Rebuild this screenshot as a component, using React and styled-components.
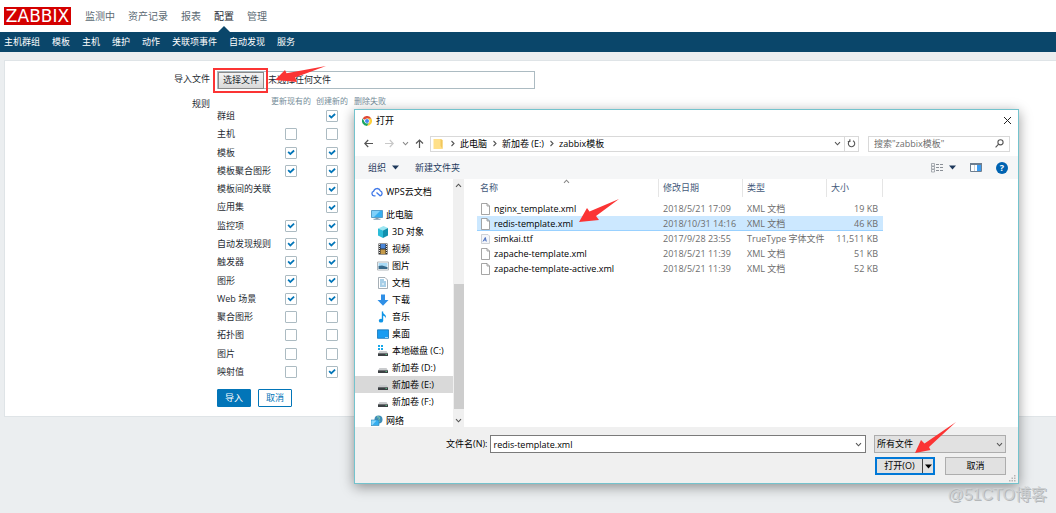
import { useState } from "react";
import styled, { createGlobalStyle } from "styled-components";

const GlobalStyle = createGlobalStyle`
  * {
    box-sizing: border-box;
  }
  body {
    margin: 0;
    background-color: #ebeef0;
    color: #1f2c33;
    font-family: "Open Sans", "Noto Sans CJK SC", sans-serif;
    font-size: 9px;
    line-height: 12px;
  }
  button, input, select {
    font: inherit;
    color: inherit;
    margin: 0;
  }
`;

const Page = styled.div`
  position: relative;
  min-height: 100vh;
`;

// ---- top navigation ----

const Header = styled.header`
  display: flex;
  align-items: center;
  height: 32px;
  padding-left: 4px;
  background-color: #fff;
`;

const Logo = styled.a`
  width: 67px;
  background-color: #d40000;
  color: #fff;
  font-family: "DejaVu Sans", sans-serif;
  font-size: 17px;
  line-height: 18px;
  text-align: center;
  text-decoration: none;
`;

const MainMenu = styled.nav`
  display: flex;
  align-self: stretch;
  gap: 13px;
  margin-left: 14px;
`;

const MainLink = styled.a`
  position: relative;
  display: flex;
  align-items: center;
  color: ${(props) => (props.$active ? "#1f2c33" : "#5b6a73")};
  font-size: 10px;
  text-decoration: none;

  &::after {
    content: "";
    display: ${(props) => (props.$active ? "block" : "none")};
    position: absolute;
    left: 50%;
    bottom: 0;
    margin-left: -6px;
    border: 6px solid transparent;
    border-top: 0;
    border-bottom-color: #0a466a;
  }
`;

const SubMenu = styled.nav`
  display: flex;
  align-items: center;
  gap: 12px;
  height: 20px;
  padding-left: 4px;
  background-color: #0a466a;
`;

const SubLink = styled.a`
  color: #fff;
  text-decoration: none;
`;

// ---- import form ----

const Card = styled.form`
  margin: 8px 0 0 4px;
  padding: 10px 0 9px;
  border: 1px solid #dfe4e7;
  border-right: 0;
  background-color: #fff;
`;

const FormRow = styled.div`
  display: flex;
  align-items: flex-start;
  gap: 7px;
  margin-bottom: ${(props) => props.$space || 0}px;
`;

const FormLabel = styled.div`
  flex: none;
  width: 205px;
  padding-top: ${(props) => props.$top || 0}px;
  text-align: right;
`;

const FileField = styled.div`
  display: flex;
  align-items: center;
  gap: 4px;
  width: 318px;
  height: 18px;
  border: 1px solid #acbbc2;
`;

const FileButton = styled.button`
  width: 46px;
  height: 17px;
  padding: 0;
  border: 1px solid #8a8a8a;
  background: linear-gradient(#f4f4f4, #d9d9d9);
  line-height: 12px;
`;

const Rules = styled.table`
  table-layout: fixed;
  width: 173px;
  height: 286px;
  border-collapse: collapse;

  td, th {
    padding: 0;
    font-weight: normal;
    white-space: nowrap;
    text-align: center;
    line-height: 12px;
  }
  thead th {
    height: 12px;
    color: #768d99;
    font-size: 8px;
  }
  tbody th {
    text-align: left;
  }
`;

const Check = styled.input`
  display: block;
  appearance: none;
  width: 12px;
  height: 12px;
  margin: 0 auto;
  border: 1px solid #acbbc2;
  border-radius: 1px;
  background-color: #fff;

  &:checked::before {
    content: "";
    display: block;
    width: 10px;
    height: 10px;
    background-color: #0275b8;
    clip-path: polygon(15% 48%, 28% 36%, 43% 52%, 75% 22%, 87% 35%, 43% 77%);
  }
`;

const FormButton = styled.button`
  width: 34px;
  height: 18px;
  padding: 0;
  border: 1px solid #0275b8;
  border-radius: 1px;
  background-color: ${(props) => (props.$primary ? "#0275b8" : "#fff")};
  color: ${(props) => (props.$primary ? "#fff" : "#0275b8")};
`;

// ---- open file dialog ----

const Dialog = styled.section`
  position: absolute;
  top: 109px;
  left: 354px;
  right: 37px;
  border: 1px solid #74c3cd;
  background-color: #fff;
  box-shadow: 0 3px 12px rgba(0, 0, 0, 0.4);
  color: #000;
`;

const TitleBar = styled.div`
  display: flex;
  align-items: center;
  gap: 4px;
  height: 21px;
  padding: 0 6px 0 7px;
`;

const CloseButton = styled.button`
  display: flex;
  margin-left: auto;
  padding: 0;
  border: 0;
  background: none;
`;

const AddressRow = styled.div`
  display: flex;
  align-items: center;
  height: 25px;
  padding: 0 8px 0 9px;
  color: #555;
`;

const NavButton = styled.button`
  display: flex;
  margin-right: ${(props) => props.$gap}px;
  padding: 0;
  border: 0;
  background: none;
`;

const AddressBox = styled.div`
  display: flex;
  flex: 1;
  align-items: center;
  height: 16px;
  padding-left: 2px;
  border: 1px solid #d9d9d9;
  color: #000;
`;

const Crumbs = styled.div`
  display: flex;
  flex: 1;
  align-items: center;
  gap: 4px;
  margin-left: 6px;
`;

const RefreshCell = styled.button`
  display: flex;
  align-items: center;
  justify-content: center;
  width: 14px;
  height: 14px;
  margin-left: 3px;
  padding: 0;
  border: 0;
  border-left: 1px solid #d9d9d9;
  background: none;
`;

const SearchBox = styled.div`
  display: flex;
  align-items: center;
  width: 142px;
  height: 16px;
  margin-left: 9px;
  padding: 0 5px;
  border: 1px solid #d9d9d9;
`;

const SearchInput = styled.input`
  flex: 1;
  min-width: 0;
  height: 12px;
  padding: 0;
  border: 0;
  outline: 0;

  &::placeholder {
    color: #6d6d6d;
  }
`;

const Toolbar = styled.div`
  display: flex;
  align-items: center;
  gap: 16px;
  height: 23px;
  padding: 0 10px 0 13px;
  background-color: #f5f6f7;
  color: #1e395b;
`;

const ToolButton = styled.button`
  display: flex;
  align-items: center;
  gap: 6px;
  padding: 0;
  border: 0;
  background: none;
`;

const ToolIcons = styled.div`
  display: flex;
  align-items: center;
  gap: 14px;
  margin-left: auto;
`;

const Browser = styled.div`
  display: flex;
  height: 248px;
  overflow: hidden;
`;

const Tree = styled.div`
  width: 98px;
  padding-top: 4px;
`;

const TreeItem = styled.div`
  display: flex;
  align-items: center;
  gap: 3px;
  height: 17px;
  margin-bottom: ${(props) => props.$space || 0}px;
  padding-left: ${(props) => (props.$child ? 22 : 16)}px;
  background-color: ${(props) => (props.$selected ? "#d9d9d9" : "transparent")};
  white-space: nowrap;
`;

const ScrollTrack = styled.div`
  display: flex;
  flex-direction: column;
  align-items: center;
  justify-content: space-between;
  width: 11px;
  padding: 3px 0;
  background-color: #f0f0f0;
`;

const ScrollThumb = styled.div`
  width: 10px;
  height: 125px;
  margin: 86px 0 0;
  background-color: #cdcdcd;
`;

const FileArea = styled.div`
  flex: 1;
  padding-left: 13px;
`;

const FileTable = styled.table`
  table-layout: fixed;
  width: 406px;
  border-collapse: separate;
  border-spacing: 0;

  th {
    height: 18px;
    padding: 0 0 0 4px;
    border-right: 1px solid #e5e5e5;
    color: #43597a;
    font-weight: normal;
    text-align: left;
  }
  th:first-child {
    padding-left: 3px;
  }
  tbody::before {
    content: "";
    display: block;
    height: 4px;
  }
`;

const SortHead = styled.div`
  position: relative;

  svg {
    position: absolute;
    top: -4px;
    left: 50%;
    margin-left: -6px;
  }
`;

const FileRow = styled.tr`
  td {
    height: 15px;
    padding: 0 0 0 4px;
    border-top: 1px solid ${(props) => (props.$selected ? "#cce8ff" : "transparent")};
    border-bottom: 1px solid ${(props) => (props.$selected ? "#99d1ff" : "transparent")};
    background-color: ${(props) => (props.$selected ? "#cce8ff" : "transparent")};
    color: #6d6d6d;
    white-space: nowrap;
  }
  td:first-child {
    color: #000;
  }
  td:last-child {
    padding-right: 5px;
    text-align: right;
  }
`;

const FileName = styled.div`
  display: flex;
  align-items: center;
  gap: 4px;
`;

const Footer = styled.div`
  position: relative;
  padding: 8px 12px 8px 91px;
  background-color: #f0f0f0;
`;

const FooterRow = styled.div`
  display: flex;
  align-items: center;
  justify-content: flex-end;
  margin-bottom: ${(props) => props.$space || 0}px;
`;

const NameField = styled.div`
  display: flex;
  flex: 1;
  align-items: center;
  height: 18px;
  margin: 0 8px 0 3px;
  padding-right: 3px;
  border: 1px solid #7a7a7a;
  background-color: #fff;
`;

const NameInput = styled.input`
  flex: 1;
  min-width: 0;
  height: 14px;
  padding: 0 0 0 2px;
  border: 0;
  outline: 0;
  background: none;
`;

const TypeField = styled.div`
  display: flex;
  position: relative;
  width: 132px;

  svg {
    position: absolute;
    top: 6px;
    right: 3px;
    pointer-events: none;
  }
`;

const TypeSelect = styled.select`
  appearance: none;
  width: 100%;
  height: 18px;
  padding: 0 2px;
  border: 1px solid #adadad;
  border-radius: 0;
  background-color: #e1e1e1;
`;

const SplitButton = styled.div`
  display: flex;
  width: 60px;
  height: 18px;
  margin-right: 10px;
  border: 2px solid #0078d7;
  background-color: #e1e1e1;
`;

const SplitPart = styled.button`
  display: flex;
  flex: ${(props) => (props.$arrow ? "none" : 1)};
  align-items: center;
  justify-content: center;
  width: ${(props) => (props.$arrow ? "11px" : "auto")};
  padding: 0;
  border: 0;
  border-left: ${(props) => (props.$arrow ? "1px solid #444" : "0")};
  background: none;
`;

const CancelButton = styled.button`
  width: 61px;
  height: 18px;
  padding: 0;
  border: 1px solid #adadad;
  background-color: #e1e1e1;
`;

const Grip = styled.svg`
  position: absolute;
  right: 2px;
  bottom: 1px;
`;

// ---- marks over the screen ----

const RedFrame = styled.div`
  position: absolute;
  top: 68px;
  left: 213px;
  width: 55px;
  height: 25px;
  border: 2px solid #fb3434;
  pointer-events: none;
`;

const RedArrow = styled.svg`
  position: absolute;
  top: ${(props) => props.$top}px;
  left: ${(props) => props.$left}px;
  pointer-events: none;
  fill: #fb3434;
`;

const Watermark = styled.div`
  position: absolute;
  right: 9px;
  bottom: 8px;
  color: #cdd0d2;
  font-family: "Liberation Sans", "Noto Sans CJK SC", sans-serif;
  font-size: 16px;
  line-height: 20px;
  text-shadow: 1px 1px 0 #b4b7b9;
`;

// ---- icons ----

const Chevron = ({ dir = "right", color = "#555", size = 7 }) => {
  const paths = {
    right: "M2.5 1 5 3.5 2.5 6",
    down: "M1 2.2 3.5 4.8 6 2.2",
    up: "M1 4.8 3.5 2.2 6 4.8",
  };
  return (
    <svg width={size} height={size} viewBox="0 0 7 7" fill="none" stroke={color} strokeWidth="1.1">
      <path d={paths[dir]} />
    </svg>
  );
};

const Caret = ({ color = "#1e395b" }) => (
  <svg width="7" height="5" viewBox="0 0 7 5" fill={color}>
    <path d="M0 .5h7L3.5 4.5z" />
  </svg>
);

const ArrowIcon = ({ dir, color }) => (
  <svg width="9" height="9" viewBox="0 0 9 9" fill="none" stroke={color} strokeWidth="1.2">
    {dir === "left" && <path d="M9 4.5H1M4.2 1 .8 4.5 4.2 8" />}
    {dir === "right" && <path d="M0 4.5h8M4.8 1l3.4 3.5L4.8 8" />}
    {dir === "up" && <path d="M4.5 9V1M1 4.5 4.5 1 8 4.5" />}
  </svg>
);

const ChromeIcon = () => (
  <svg width="10" height="10" viewBox="0 0 20 20">
    <path d="M10 10 1.3 5A10 10 0 0 1 18.7 5z" fill="#df4b37" />
    <path d="M10 10V5h8.7A10 10 0 0 1 10 20l4.3-7.5z" fill="#fdd03b" />
    <path d="M10 10 14.3 12.5 10 20A10 10 0 0 1 1.3 5l4.4 7.5z" fill="#1da462" />
    <circle cx="10" cy="10" r="5" fill="#fff" />
    <circle cx="10" cy="10" r="4" fill="#4688f4" />
  </svg>
);

const FolderIcon = () => (
  <svg width="10" height="12" viewBox="0 0 10 12">
    <path d="M.5 1h7l2 1v9h-9z" fill="#ffe08a" />
    <path d="M7.5 1v7l2 3V2z" fill="#f2c75c" />
  </svg>
);

const RefreshIcon = () => (
  <svg width="9" height="9" viewBox="0 0 9 9" fill="none" stroke="#555" strokeWidth="1.1">
    <path d="M6 1.7A3.2 3.2 0 1 1 2.6 2M2.9.3v2.2H.8" />
  </svg>
);

const SearchIcon = () => (
  <svg width="9" height="9" viewBox="0 0 9 9" fill="none" stroke="#555" strokeWidth="1.1">
    <circle cx="5.5" cy="3.3" r="2.6" />
    <path d="M3.6 5.2.6 8.4" />
  </svg>
);

const ViewIcon = () => (
  <svg width="12" height="10" viewBox="0 0 12 10" fill="none" stroke="#8a8f96" strokeWidth="1">
    <path d="M.5.5h3v2.500h-3zM.5 3.500h3v2.500h-3zM.5 6.500h3v2.500h-3z" strokeWidth=".7" />
    <path d="M5 1.5h3M9 1.5h3M5 4.5h3M9 4.5h3M5 7.5h3M9 7.5h3" />
  </svg>
);

const PaneIcon = () => (
  <svg width="12" height="9" viewBox="0 0 12 9">
    <path d="M.5.5h11v8H.5z" fill="#fff" stroke="#6e7f91" />
    <path d="M0 0h12v2H0z" fill="#6e7f91" />
    <path d="M7 2h4v6H7z" fill="#3c9cf0" />
    <path d="M4 2h1v6H4z" fill="#c5d0da" />
  </svg>
);

const HelpIcon = styled.span`
  width: 12px;
  height: 12px;
  border-radius: 50%;
  background-color: #0063b1;
  color: #fff;
  font-weight: bold;
  line-height: 12px;
  text-align: center;
`;

const DriveIcon = ({ system }) => (
  <svg width="12" height="12" viewBox="0 0 12 12">
    {system && <path d="M1 0h2v2H1zM4 0h2v2H4zM1 3h2v2H1zM4 3h2v2H4z" fill="#18a8ea" />}
    <path d="M2.5 6h7l1.5 2.5H1z" fill="#c9cbcd" />
    <path d="M1 8.3h10V11H1z" fill="#3c4043" />
    <path d="M8.5 9.2H10v.9H8.5z" fill="#58d68d" />
  </svg>
);

const treeIcons = {
  cloud: (
    <svg width="12" height="12" viewBox="0 0 12 12" fill="none" stroke="#3f78e8" strokeWidth="1.3">
      <path d="M4.5 9.8H3a2.3 2.3 0 0 1-.4-4.5A3.5 3.5 0 0 1 9.3 4.8a2.6 2.6 0 0 1-.2 5L5.5 6.5" />
    </svg>
  ),
  pc: (
    <svg width="12" height="12" viewBox="0 0 12 12">
      <path d="M.5 1.5h11v7H.5z" fill="#35aef0" stroke="#3a86b8" strokeWidth=".7" />
      <path d="M1 2h8L3 8H1z" fill="#7fd0fa" />
      <path d="M4.5 8.8h3v1h2v.9h-7v-.9h2z" fill="#7f9bb0" />
    </svg>
  ),
  cube: (
    <svg width="12" height="12" viewBox="0 0 12 12">
      <path d="M1 2.5 6.5 0 11 2 6 4.5z" fill="#9be6f2" />
      <path d="M1 2.5 6 4.5V12L1 9.5z" fill="#2bbcd8" />
      <path d="M6 4.5 11 2v7.5L6 12z" fill="#1090ae" />
    </svg>
  ),
  video: (
    <svg width="12" height="12" viewBox="0 0 12 12">
      <path d="M1.5.5h9v11h-9z" fill="#2b2b2b" />
      <path d="M3.5 1h5v4.5h-5z" fill="#4a86d8" />
      <path d="M3.5 6.5h5V11h-5z" fill="#c59a4a" />
      <path d="M2.5 1v10M9.5 1v10" stroke="#ddd" strokeDasharray="1 1" />
    </svg>
  ),
  image: (
    <svg width="12" height="12" viewBox="0 0 12 12">
      <path d="M.5 2h11v8H.5z" fill="#fff" stroke="#a0a6ab" strokeWidth=".8" />
      <path d="M1.5 3h9v3.5h-9z" fill="#a8daf6" />
      <path d="M1.5 6 5 5.5l5.5 1.5V9h-9z" fill="#35688a" />
    </svg>
  ),
  doc: (
    <svg width="12" height="12" viewBox="0 0 12 12">
      <path d="M1.5.5H8L10.5 3v8.5h-9z" fill="#fff" stroke="#8f9aa3" strokeWidth=".8" />
      <path d="M3 3h4M3 5h6M3 7h2.5M3 9h6M6.5 7H9" stroke="#3d93c9" strokeWidth=".9" />
    </svg>
  ),
  download: (
    <svg width="12" height="12" viewBox="0 0 12 12" fill="#2f8fe6">
      <path d="M4 .5h4V6h3.5L6 11.8.5 6H4z" />
    </svg>
  ),
  music: (
    <svg width="12" height="12" viewBox="0 0 12 12">
      <path d="M5.500.5v9" stroke="#0f94e6" strokeWidth="1.4" />
      <path d="M5 .5c.5 2.500 5.500 3 3.500 7C9 5 6 5 5 4z" fill="#0f94e6" />
      <ellipse cx="4" cy="9.7" rx="2.2" ry="1.9" fill="#0f94e6" />
    </svg>
  ),
  desktop: (
    <svg width="12" height="12" viewBox="0 0 12 12">
      <path d="M.5 1.8h11v8.5H.5z" fill="#189cf2" stroke="#1273b8" strokeWidth=".8" />
      <path d="M8 9.5h3" stroke="#bfe4ff" strokeWidth=".8" />
    </svg>
  ),
  system: <DriveIcon system />,
  drive: <DriveIcon />,
  network: (
    <svg width="12" height="12" viewBox="0 0 12 12">
      <circle cx="7.5" cy="4.5" r="4" fill="#3f8fb8" />
      <path d="M6 2c2-1 3 1 2 2s1 2 0 3" stroke="#8fd3a8" fill="none" />
      <path d="M0 5h8v5.5H0z" fill="#35aef0" stroke="#2b7fb0" strokeWidth=".6" />
      <path d="M.5 5.5h5l-4 4.5h-1z" fill="#8bd6fb" />
    </svg>
  ),
};

const XmlIcon = () => (
  <svg width="9" height="12" viewBox="0 0 9 12" fill="#fff" stroke="#8f8f8f" strokeWidth=".8">
    <path d="M.5.5H6L8.5 3v8.5h-8zM6 .5V3h2.5" />
  </svg>
);

const FontIcon = () => (
  <svg width="9" height="10" viewBox="0 0 9 10">
    <path d="M.5.5H7L8.5 2v7.5h-8z" fill="#f4f6fa" stroke="#c3c6cc" strokeWidth=".8" />
    <path d="M2 7.5 4.3 3.5 5.3 7.5M3 6h2" fill="none" stroke="#3a62b8" strokeWidth=".9" />
  </svg>
);

// ---- data ----

const mainMenu = ["监测中", "资产记录", "报表", "配置", "管理"];
const subMenu = ["主机群组", "模板", "主机", "维护", "动作", "关联项事件", "自动发现", "服务"];

// null means that the rule has no such option
const rules = [
  { name: "群组", update: null, create: true },
  { name: "主机", update: false, create: false },
  { name: "模板", update: true, create: true },
  { name: "模板聚合图形", update: true, create: true },
  { name: "模板间的关联", update: null, create: true },
  { name: "应用集", update: null, create: true },
  { name: "监控项", update: true, create: true },
  { name: "自动发现规则", update: true, create: true },
  { name: "触发器", update: true, create: true },
  { name: "图形", update: true, create: true },
  { name: "Web 场景", update: true, create: true },
  { name: "聚合图形", update: false, create: false },
  { name: "拓扑图", update: false, create: false },
  { name: "图片", update: false, create: false },
  { name: "映射值", update: false, create: true },
];

const tree = [
  { name: "WPS云文档", icon: "cloud", space: 6 },
  { name: "此电脑", icon: "pc" },
  { name: "3D 对象", icon: "cube", child: true },
  { name: "视频", icon: "video", child: true },
  { name: "图片", icon: "image", child: true },
  { name: "文档", icon: "doc", child: true },
  { name: "下载", icon: "download", child: true },
  { name: "音乐", icon: "music", child: true },
  { name: "桌面", icon: "desktop", child: true },
  { name: "本地磁盘 (C:)", icon: "system", child: true },
  { name: "新加卷 (D:)", icon: "drive", child: true },
  { name: "新加卷 (E:)", icon: "drive", child: true, selected: true },
  { name: "新加卷 (F:)", icon: "drive", child: true, space: 2 },
  { name: "网络", icon: "network" },
];

const files = [
  { name: "nginx_template.xml", date: "2018/5/21 17:09", type: "XML 文档", size: "19 KB" },
  { name: "redis-template.xml", date: "2018/10/31 14:16", type: "XML 文档", size: "46 KB" },
  { name: "simkai.ttf", date: "2017/9/28 23:55", type: "TrueType 字体文件", size: "11,511 KB" },
  { name: "zapache-template.xml", date: "2018/5/21 11:39", type: "XML 文档", size: "51 KB" },
  { name: "zapache-template-active.xml", date: "2018/5/21 11:39", type: "XML 文档", size: "52 KB" },
];

function ImportForm() {
  return (
    <Card onSubmit={(e) => e.preventDefault()}>
      <FormRow $space={6}>
        <FormLabel $top={2} id="file-label">导入文件</FormLabel>
        <FileField>
          <FileButton type="button" aria-describedby="file-label">选择文件</FileButton>
          <span>未选择任何文件</span>
        </FileField>
      </FormRow>
      <FormRow $space={8}>
        <FormLabel $top={3}>规则</FormLabel>
        <Rules>
          <colgroup>
            <col width="51" />
            <col width="46" />
            <col width="36" />
            <col width="40" />
          </colgroup>
          <thead>
            <tr>
              <th />
              <th>更新现有的</th>
              <th>创建新的</th>
              <th>删除失败</th>
            </tr>
          </thead>
          <tbody>
            {rules.map((rule) => (
              <tr key={rule.name}>
                <th>{rule.name}</th>
                <td>
                  {rule.update !== null && (
                    <Check type="checkbox" defaultChecked={rule.update} aria-label={rule.name + " 更新现有的"} />
                  )}
                </td>
                <td>
                  <Check type="checkbox" defaultChecked={rule.create} aria-label={rule.name + " 创建新的"} />
                </td>
                <td />
              </tr>
            ))}
          </tbody>
        </Rules>
      </FormRow>
      <FormRow>
        <FormLabel />
        <FormButton $primary type="submit">导入</FormButton>
        <FormButton type="button">取消</FormButton>
      </FormRow>
    </Card>
  );
}

function OpenDialog() {
  const [selected, setSelected] = useState("redis-template.xml");

  return (
    <Dialog role="dialog" aria-label="打开">
      <TitleBar>
        <ChromeIcon />
        <span>打开</span>
        <CloseButton aria-label="关闭">
          <svg width="9" height="9" viewBox="0 0 9 9" stroke="#222" strokeWidth="1">
            <path d="M1 1l7 7M8 1 1 8" />
          </svg>
        </CloseButton>
      </TitleBar>

      <AddressRow>
        <NavButton $gap={12} aria-label="后退"><ArrowIcon dir="left" color="#555" /></NavButton>
        <NavButton $gap={8} aria-label="前进"><ArrowIcon dir="right" color="#c8c8c8" /></NavButton>
        <NavButton $gap={6} aria-label="最近"><Chevron dir="down" color="#888" /></NavButton>
        <NavButton $gap={6} aria-label="上移"><ArrowIcon dir="up" color="#555" /></NavButton>
        <AddressBox>
          <FolderIcon />
          <Crumbs>
            <Chevron />
            <span>此电脑</span>
            <Chevron />
            <span>新加卷 (E:)</span>
            <Chevron />
            <span>zabbix模板</span>
          </Crumbs>
          <Chevron dir="down" />
          <RefreshCell aria-label="刷新"><RefreshIcon /></RefreshCell>
        </AddressBox>
        <SearchBox>
          <SearchInput placeholder={'搜索"zabbix模板"'} aria-label="搜索" />
          <SearchIcon />
        </SearchBox>
      </AddressRow>

      <Toolbar>
        <ToolButton>组织 <Caret /></ToolButton>
        <ToolButton>新建文件夹</ToolButton>
        <ToolIcons>
          <ToolButton aria-label="更改视图"><ViewIcon /><Caret /></ToolButton>
          <ToolButton aria-label="预览窗格"><PaneIcon /></ToolButton>
          <HelpIcon>?</HelpIcon>
        </ToolIcons>
      </Toolbar>

      <Browser>
        <Tree>
          {tree.map((item) => (
            <TreeItem key={item.name} $child={item.child} $selected={item.selected} $space={item.space}>
              {treeIcons[item.icon]}
              <span>{item.name}</span>
            </TreeItem>
          ))}
        </Tree>
        <ScrollTrack>
          <Chevron dir="up" />
          <ScrollThumb />
          <Chevron dir="down" />
        </ScrollTrack>
        <FileArea>
          <FileTable>
            <colgroup>
              <col width="182" />
              <col width="84" />
              <col width="84" />
              <col width="56" />
            </colgroup>
            <thead>
              <tr>
                <th><SortHead>名称<Chevron dir="up" color="#888" /></SortHead></th>
                <th>修改日期</th>
                <th>类型</th>
                <th>大小</th>
              </tr>
            </thead>
            <tbody>
              {files.map((file) => (
                <FileRow key={file.name} $selected={file.name === selected} onClick={() => setSelected(file.name)}>
                  <td>
                    <FileName>
                      {file.name.endsWith(".ttf") ? <FontIcon /> : <XmlIcon />}
                      <span>{file.name}</span>
                    </FileName>
                  </td>
                  <td>{file.date}</td>
                  <td>{file.type}</td>
                  <td>{file.size}</td>
                </FileRow>
              ))}
            </tbody>
          </FileTable>
        </FileArea>
      </Browser>

      <Footer>
        <FooterRow $space={4}>
          <label htmlFor="file-name">文件名(N):</label>
          <NameField>
            <NameInput id="file-name" value={selected} onChange={(e) => setSelected(e.target.value)} />
            <Chevron dir="down" />
          </NameField>
          <TypeField>
            <TypeSelect aria-label="文件类型">
              <option>所有文件</option>
            </TypeSelect>
            <Chevron dir="down" />
          </TypeField>
        </FooterRow>
        <FooterRow>
          <SplitButton>
            <SplitPart>打开(O)</SplitPart>
            <SplitPart $arrow aria-label="更多"><Caret color="#000" /></SplitPart>
          </SplitButton>
          <CancelButton>取消</CancelButton>
        </FooterRow>
        <Grip width="7" height="7" viewBox="0 0 7 7" fill="#b5b5b5">
          <path d="M5 0h1.5v1.5H5zM2.5 2.5H4V4H2.5zM5 2.5h1.5V4H5zM0 5h1.5v1.5H0zM2.5 5H4v1.5H2.5zM5 5h1.5v1.5H5z" />
        </Grip>
      </Footer>
    </Dialog>
  );
}

function App() {
  return (
    <Page>
      <GlobalStyle />
      <Header>
        <Logo href="#">ZABBIX</Logo>
        <MainMenu>
          {mainMenu.map((item) => (
            <MainLink key={item} href="#" $active={item === "配置"}>{item}</MainLink>
          ))}
        </MainMenu>
      </Header>
      <SubMenu>
        {subMenu.map((item) => (
          <SubLink key={item} href="#">{item}</SubLink>
        ))}
      </SubMenu>
      <ImportForm />
      <OpenDialog />

      <RedFrame />
      <RedArrow $left={274} $top={64} width="54" height="22">
        <path d="M1 16 11 6l1.500 3.300L52 2 21 13.500l2 4.500z" />
      </RedArrow>
      <RedArrow $left={578} $top={197} width="44" height="28">
        <path d="M1 25 9 11l2.500 3.500L41 2 18 19l3 4z" />
      </RedArrow>
      <RedArrow $left={914} $top={420} width="44" height="34">
        <path d="M1 33 7 20l3.500 3.500L42 2 15 27l1.500 3z" />
      </RedArrow>
      <Watermark>@51CTO博客</Watermark>
    </Page>
  );
}

export default App;
